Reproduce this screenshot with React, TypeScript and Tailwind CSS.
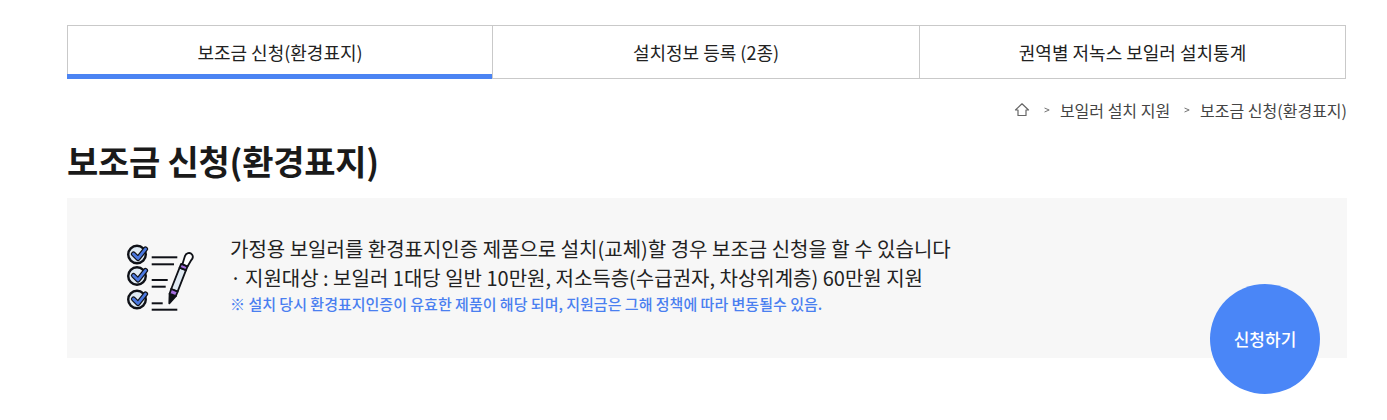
const FONT = "font-['Noto_Sans_CJK_KR','Noto_Sans',sans-serif]"

const TABS = ["보조금 신청(환경표지)", "설치정보 등록 (2종)", "권역별 저녹스 보일러 설치통계"]

const HomeIcon = () => (
  <svg className="w-[16px] h-[16px]" viewBox="0 0 16 16" fill="none" stroke="#666" strokeWidth={1.2} strokeLinejoin="round">
    <path d="M1.5 8L8 1.8L14.5 8H12V13.5H4V8Z" />
  </svg>
)

const Chevron = () => (
  <svg className="w-[6px] h-[6px]" viewBox="0 0 6 6" fill="none" stroke="#666" strokeWidth={0.9}>
    <path d="M0.5 1L5.2 3L0.5 5" />
  </svg>
)

const CheckCircle = ({ cy }: { cy: number }) => {
  const check = `M8.5 ${cy - 0.5}L13 ${cy + 4}L20.5 ${cy - 5.5}`
  return (
    <g>
      <circle cx={12} cy={cy} r={8.8} fill="#dfeaf3" stroke="#0f1117" strokeWidth={2.4} />
      <path d={check} fill="none" stroke="#0f1117" strokeWidth={5.2} strokeLinecap="round" strokeLinejoin="round" />
      <path d={check} fill="none" stroke="#4a78e0" strokeWidth={2.8} strokeLinecap="round" strokeLinejoin="round" />
    </g>
  )
}

const ChecklistIcon = () => (
  <svg className="w-[70px] h-[72px] shrink-0" viewBox="0 0 70 72" fill="none">
    <CheckCircle cy={10.5} />
    <CheckCircle cy={32} />
    <CheckCircle cy={55.5} />
    <g stroke="#0f1117" strokeWidth={2}>
      <path d="M26.7 13.3H52.3" />
      <path d="M26.7 20.3H49" />
      <path d="M26.7 36H42.7" />
      <path d="M26.7 42.7H40.7" />
      <path d="M26.7 59.3H37.7" />
      <path d="M26.7 65.7H52.3" />
    </g>
    {/* pen */}
    <g stroke="#0f1117" strokeWidth={1.8} strokeLinejoin="round">
      <path d="M44.3 59.3L44.6 49.7L50.8 52.1Z" fill="#0f1117" />
      <path d="M46.2 45L54.6 23.6L61 26.2L52.6 47.6Z" fill="#dfeaf3" />
      <path d="M44.6 49.7L46.2 45L52.6 47.6L50.8 52.1Z" fill="#a56fe0" />
      <path d="M54.6 23.6L56.1 19.9L62.5 22.5L61 26.2Z" fill="#a56fe0" />
      <path d="M57.5 20L59.8 12.5C60.8 9 65 7.8 67 10.5C68.5 12.5 67.5 15 66 16.5L62.5 22.5Z" fill="#fff" />
    </g>
  </svg>
)

export default function App() {
  return (
    <div className={`${FONT} bg-white w-[1387px] h-[420px] overflow-hidden pt-[25px] pl-[67px]`}>
      <div className="w-[1280px]">
        {/* Tabs */}
        <div className="w-[1279px] grid grid-cols-[424px_427px_1fr] h-[54px] border border-[#c9c9c9]">
          {TABS.map((tab, i) => (
            <div
              key={tab}
              className={`relative flex items-center justify-center text-[18px] text-[#222] ${
                i > 0 ? "border-l border-[#c9c9c9]" : ""
              }`}
            >
              {tab}
              {i === 0 && <span className="absolute left-[-1px] right-0 bottom-[-1px] h-[5px] bg-[#4b84f3]" />}
            </div>
          ))}
        </div>

        {/* Breadcrumb */}
        <div className="flex items-center justify-end h-[20px] mt-[21px] text-[16px] text-[#444]">
          <HomeIcon />
          <span className="ml-[14px] mr-[10px]"><Chevron /></span>
          <span>보일러 설치 지원</span>
          <span className="ml-[14px] mr-[10px]"><Chevron /></span>
          <span>보조금 신청(환경표지)</span>
        </div>

        <h1 className="mt-[16px] h-[50px] text-[34px] leading-[50px] font-bold text-[#1a1a1a] tracking-[-0.25px]">
          보조금 신청(환경표지)
        </h1>

        {/* Notice panel */}
        <div className="relative mt-[12px] h-[160px] bg-[#f7f7f7] flex items-start pl-[58px] pt-[46px]">
          <ChecklistIcon />
          <div className="ml-[35px] -mt-[10px]">
            <p className="text-[20px] leading-[29px] text-[#222]">가정용 보일러를 환경표지인증 제품으로 설치(교체)할 경우 보조금 신청을 할 수 있습니다</p>
            <p className="flex text-[20px] leading-[29px] text-[#222]">
              <span className="w-[15px]">·</span>
              <span>지원대상 : 보일러 1대당 일반 10만원, 저소득층(수급권자, 차상위계층) 60만원 지원</span>
            </p>
            <p className="text-[15px] leading-[23px] font-medium text-[#4a7ff0]">※ 설치 당시 환경표지인증이 유효한 제품이 해당 되며, 지원금은 그해 정책에 따라 변동될수 있음.</p>
          </div>
          <div className="absolute right-[27px] bottom-[-36px] w-[110px] h-[110px] rounded-full bg-[#4a86f7] flex items-center justify-center text-white text-[17px] font-medium">
            신청하기
          </div>
        </div>
      </div>
    </div>
  )
}
